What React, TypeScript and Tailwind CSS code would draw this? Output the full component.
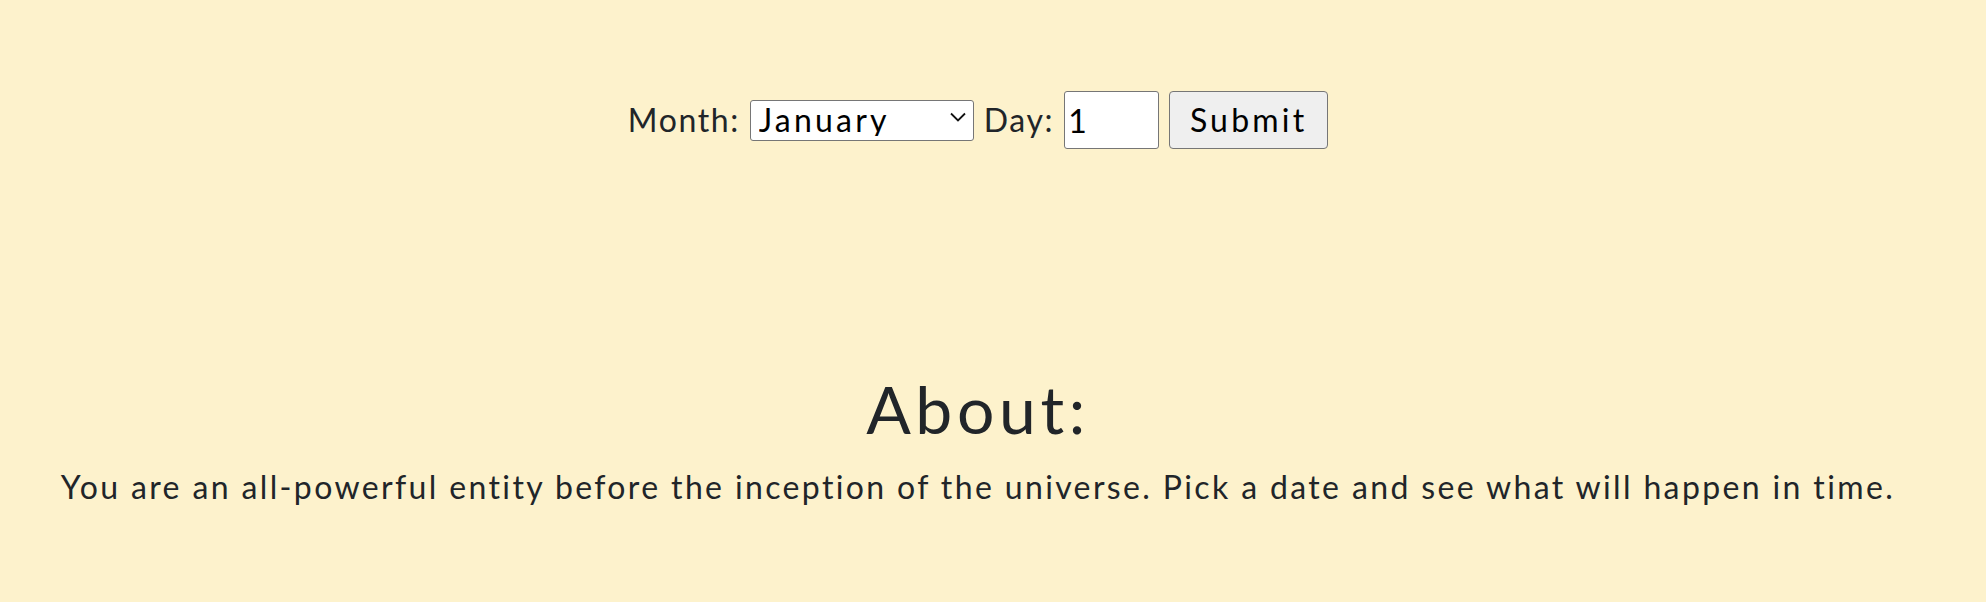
import React, { useState } from 'react';

const months = [
  'January', 'February', 'March', 'April', 'May', 'June',
  'July', 'August', 'September', 'October', 'November', 'December',
];

export default function App() {
  const [month, setMonth] = useState('January');
  const [day, setDay] = useState('1');

  return (
    <div
      className="min-h-screen w-full bg-[#fdf2cc] text-[#212529] pr-[30px] pt-[91px] tracking-[0.1em]"
      style={{ fontFamily: 'Lato, "Noto Sans", sans-serif' }}
    >
      <form
        className="flex items-center justify-center gap-[10px] text-[32px]"
        onSubmit={(e) => e.preventDefault()}
      >
        <label htmlFor="month">Month:</label>
        <div className="relative">
          <select
            id="month"
            value={month}
            onChange={(e) => setMonth(e.target.value)}
            className="appearance-none w-[224px] h-[41px] bg-white border border-[#767676] rounded-[3px] pl-[8px] text-[32px] leading-none text-black tracking-[0.1em]"
          >
            {months.map((m) => (
              <option key={m}>{m}</option>
            ))}
          </select>
          <svg
            className="absolute right-[8px] top-[16px] pointer-events-none"
            width="16"
            height="10"
            viewBox="0 0 16 10"
          >
            <path d="M1 1.5 L8 8.5 L15 1.5" fill="none" stroke="#111" strokeWidth="1.8" />
          </svg>
        </div>
        <label htmlFor="day">Day:</label>
        <input
          id="day"
          type="text"
          value={day}
          onChange={(e) => setDay(e.target.value)}
          className="w-[95px] h-[58px] bg-white border border-[#767676] rounded-[3px] px-[3px] text-[32px] text-black"
        />
        <button
          type="submit"
          className="w-[159px] h-[58px] bg-[#efefef] border border-[#767676] rounded-[4px] text-[32px] text-black tracking-[0.1em]"
        >
          Submit
        </button>
      </form>

      <div className="mt-[227px] flex flex-col items-center">
        <h1 className="text-[66px] leading-none tracking-[0.07em]">About:</h1>
        <p className="mt-[29px] text-[32px] leading-none tracking-[0.074em]">
          You are an all-powerful entity before the inception of the universe. Pick a date and see what will happen in time.
        </p>
      </div>
    </div>
  );
}
